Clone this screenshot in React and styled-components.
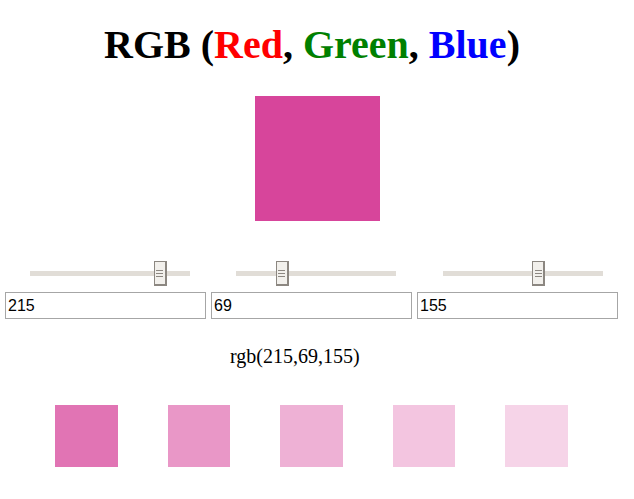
import React from 'react';
import styled, { createGlobalStyle } from 'styled-components';

const GlobalStyle = createGlobalStyle`
  html, body {
    margin: 0;
    padding: 0;
    background: #fff;
  }
  body {
    font-family: "Liberation Serif", "Times New Roman", serif;
    color: #000;
  }
`;

const Page = styled.div`
  width: 634px;
  display: flex;
  flex-direction: column;
`;

const Title = styled.h1`
  margin: 22px 0 0;
  font-size: 40px;
  line-height: 46px;
  font-weight: bold;
  text-align: center;
  padding-right: 10px;
`;

const Channel = styled.span`
  color: ${(p) => p.color};
`;

const Preview = styled.div`
  width: 125px;
  height: 125px;
  margin: 28px 0 0 255px;
  background: ${(p) => p.color};
`;

const Controls = styled.div`
  display: grid;
  grid-template-columns: repeat(3, 201px);
  column-gap: 5px;
  padding-left: 5px;
  margin-top: 40px;
`;

const Column = styled.div`
  display: flex;
  flex-direction: column;
  gap: 6px;
`;

const Slider = styled.div`
  position: relative;
  width: 160px;
  height: 25px;
  margin-left: ${(p) => p.offset}px;
`;

const Track = styled.div`
  position: absolute;
  left: 0;
  right: 0;
  top: 10px;
  height: 5px;
  background: #e1ddd7;
`;

const Thumb = styled.div`
  position: absolute;
  top: 0;
  width: 13px;
  height: 25px;
  box-sizing: border-box;
  border: 1px solid #8c8781;
  border-right-width: 2px;
  border-bottom-width: 2px;
  background: #f2f0ec;
  display: flex;
  flex-direction: column;
  align-items: center;
  justify-content: center;
  gap: 2px;
`;

const Grip = styled.span`
  width: 7px;
  height: 1px;
  background: #8c8781;
`;

const NumberField = styled.input`
  box-sizing: border-box;
  width: 201px;
  height: 27px;
  margin: 0;
  padding: 1px 2px 0;
  border: 1px solid #a6a6a6;
  font-family: "Liberation Sans", Arial, sans-serif;
  font-size: 16px;
  color: #000;
  outline: none;
`;

const Caption = styled.div`
  margin-top: 26px;
  padding-left: 230px;
  font-size: 20px;
  line-height: 23px;
`;

const Swatches = styled.div`
  display: flex;
  gap: 50px;
  padding-left: 55px;
  margin-top: 37px;
`;

const Swatch = styled.div`
  width: 62.5px;
  height: 62px;
  background: ${(p) => p.color};
`;

const rgb = [215, 69, 155];
const offsets = [25, 25, 26];
const alphas = [0.75, 0.56, 0.42, 0.31, 0.23];

const tint = (a) =>
  `rgb(${rgb.map((v) => Math.round(v * a + 255 * (1 - a))).join(',')})`;

export default function App() {
  const color = `rgb(${rgb.join(',')})`;
  return (
    <Page>
      <GlobalStyle />
      <Title>
        RGB (<Channel color="#ff0000">Red</Channel>,{' '}
        <Channel color="#008000">Green</Channel>,{' '}
        <Channel color="#0000ff">Blue</Channel>)
      </Title>
      <Preview color={color} />
      <Controls>
        {rgb.map((v, i) => (
          <Column key={i}>
            <Slider offset={offsets[i]}>
              <Track />
              <Thumb style={{ left: `${(v / 255) * 147}px` }}>
                <Grip />
                <Grip />
                <Grip />
              </Thumb>
            </Slider>
            <NumberField type="text" defaultValue={v} />
          </Column>
        ))}
      </Controls>
      <Caption>rgb({rgb.join(',')})</Caption>
      <Swatches>
        {alphas.map((a) => (
          <Swatch key={a} color={tint(a)} />
        ))}
      </Swatches>
    </Page>
  );
}
